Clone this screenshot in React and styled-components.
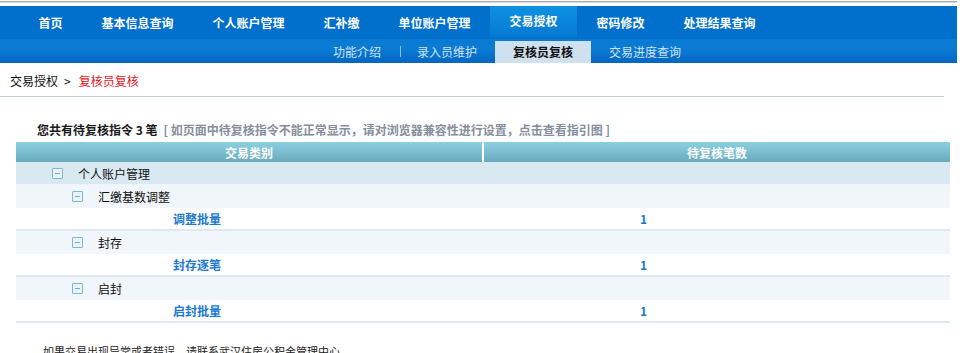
import styled, { createGlobalStyle } from "styled-components";

const GlobalStyle = createGlobalStyle`
  body {
    margin: 0;
    background: #fff;
    font-family: "Noto Sans CJK SC", "Liberation Sans", sans-serif;
    font-size: 12px;
    color: #222;
  }
`

// barra cinza fininha no topo
const TopLine = styled.div`
  width: 957px;
  height: 1px;
  margin-top: 1px;
  background: #a4a9b8;
  border-bottom: 1px solid #d9dbe2;
  margin-bottom: 3px;
`

const Header = styled.div`
  width: 957px;
`

const MainNav = styled.div`
  display: flex;
  align-items: flex-start;
  height: 33px;
  padding-left: 19px;
  background: #0070cc;
`

const MainItem = styled.div`
  height: ${(p) => (p.active ? "31px" : "33px")};
  padding: 0 19.5px;
  display: flex;
  align-items: center;
  font-weight: bold;
  font-size: 12px;
  line-height: 12px;
  color: #fff;
  background: ${(p) => (p.active ? "linear-gradient(#0d92e2, #0679d2)" : "transparent")};
  padding-bottom: ${(p) => (p.active ? "1px" : "0")};
  box-sizing: border-box;
`

const SubNav = styled.div`
  display: flex;
  align-items: flex-end;
  height: 24px;
  padding-left: 315px;
  background: linear-gradient(#0a7bd3 0%, #0a7bd3 40%, #0566c2 100%);
`

const SubItem = styled.div`
  height: 22px;
  padding: 0 18px;
  display: flex;
  align-items: center;
  font-size: 12px;
  line-height: 12px;
  color: ${(p) => (p.active ? "#111" : "#cfe3f6")};
  font-weight: ${(p) => (p.active ? "bold" : "normal")};
  background: ${(p) => (p.active ? "#cfe0ee" : "transparent")};
`

const SubSep = styled.div`
  width: 1px;
  height: 11px;
  margin: 0 -2px 6px 1px;
  background: #8fc0ea;
`

const Crumb = styled.div`
  width: 944px;
  height: 33px;
  display: flex;
  align-items: center;
  padding-left: 10px;
  box-sizing: border-box;
  border-bottom: 1px solid #c3ccd8;
  margin-top: 1px;
  font-size: 12px;
  color: #111;
`

const CrumbArrow = styled.span`
  margin: 0 8px 0 6px;
`

const CrumbCurrent = styled.span`
  color: #e8141c;
`

const Summary = styled.div`
  margin: 26px 0 5px 37px;
  height: 14px;
  line-height: 14px;
  font-weight: bold;
  font-size: 12px;
  color: #1a1a1a;
  span {
    color: #868d9c;
    margin-left: 6px;
  }
`

const Table = styled.div`
  width: 934px;
  margin-left: 16px;
  display: grid;
  grid-template-columns: 466px 468px;
`

const HeadCell = styled.div`
  height: 20px;
  display: flex;
  align-items: center;
  justify-content: center;
  font-weight: bold;
  color: #fff;
  background: linear-gradient(#8bd0e2, #69abbd);
  border-left: ${(p) => (p.divider ? "2px solid #fff" : "0")};
`

const Row = styled.div`
  grid-column: 1 / 3;
  display: grid;
  grid-template-columns: 466px 468px;
  height: 23px;
  box-sizing: border-box;
  background: ${(p) => (p.level === 1 ? "#d9e9f2" : p.level === 2 ? "#f0f6fa" : "#fff")};
  border-bottom: ${(p) => (p.level === 3 ? "2px solid #dfe9f1" : p.level === 1 ? "1px solid #eef5f9" : "0")};
`

const NameCell = styled.div`
  display: flex;
  align-items: center;
  padding-left: ${(p) => p.indent}px;
  color: #111;
`

const CountCell = styled.div`
  display: flex;
  align-items: center;
  padding-left: 158px;
`

const Minus = styled.span`
  width: 9px;
  height: 9px;
  border: 1px solid #7cb9cf;
  border-radius: 1px;
  background: #eaf4f8;
  position: relative;
  margin-right: 15px;
  &::after {
    content: "";
    position: absolute;
    left: 2px;
    right: 2px;
    top: 4px;
    height: 1px;
    background: #6fb0c8;
  }
`

const Link = styled.a`
  color: #1b79cf;
  font-weight: bold;
  text-decoration: none;
`

const Footer = styled.div`
  margin: 21px 0 0 43px;
  font-size: 11px;
  line-height: 14px;
  color: #222;
`

const groups = [
  { name: "汇缴基数调整", item: "调整批量", count: 1 },
  { name: "封存", item: "封存逐笔", count: 1 },
  { name: "启封", item: "启封批量", count: 1 },
]

const mainItems = ["首页", "基本信息查询", "个人账户管理", "汇补缴", "单位账户管理", "交易授权", "密码修改", "处理结果查询"]

export default function App() {
  return (
    <>
      <GlobalStyle />
      <TopLine />
      <Header>
        <MainNav>
          {mainItems.map((m) => (
            <MainItem key={m} active={m === "交易授权"}>{m}</MainItem>
          ))}
        </MainNav>
        <SubNav>
          <SubItem>功能介绍</SubItem>
          <SubSep />
          <SubItem>录入员维护</SubItem>
          <SubItem active>复核员复核</SubItem>
          <SubItem>交易进度查询</SubItem>
        </SubNav>
      </Header>
      <Crumb>
        交易授权<CrumbArrow>&gt;</CrumbArrow><CrumbCurrent>复核员复核</CrumbCurrent>
      </Crumb>
      <Summary>
        您共有待复核指令 3 笔
        <span>[ 如页面中待复核指令不能正常显示，请对浏览器兼容性进行设置，点击查看指引图 ]</span>
      </Summary>
      <Table>
        <HeadCell>交易类别</HeadCell>
        <HeadCell divider>待复核笔数</HeadCell>
        <Row level={1}>
          <NameCell indent={36}>
            <Minus />
            个人账户管理
          </NameCell>
          <CountCell />
        </Row>
        {groups.map((g) => (
          <>
            <Row level={2} key={g.name}>
              <NameCell indent={56}>
                <Minus />
                {g.name}
              </NameCell>
              <CountCell />
            </Row>
            <Row level={3} key={g.item}>
              <NameCell indent={157}>
                <Link href="#">{g.item}</Link>
              </NameCell>
              <CountCell>
                <Link href="#">{g.count}</Link>
              </CountCell>
            </Row>
          </>
        ))}
      </Table>
      <Footer>如果交易出现异常或者错误，请联系武汉住房公积金管理中心。</Footer>
    </>
  )
}
